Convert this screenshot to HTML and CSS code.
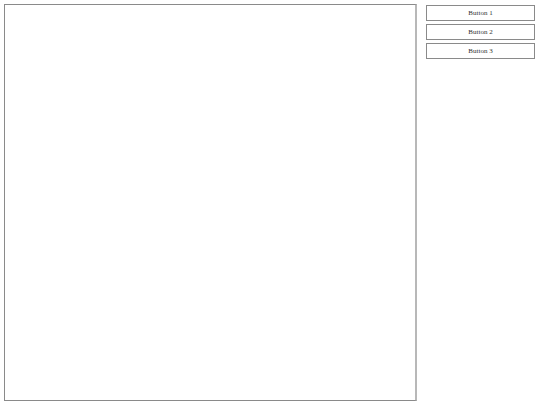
FILE: index.html
```html
<!DOCTYPE html>
<html>
<head>
<meta charset="utf-8">
<link rel="stylesheet" href="styles.css">
</head>
<body>
<div class="page">
  <div class="canvas"></div>
  <div class="controls">
    <button class="btn">Button 1</button>
    <button class="btn">Button 2</button>
    <button class="btn">Button 3</button>
  </div>
</div>
</body>
</html>
```
FILE: styles.css
```css
html, body {
  margin: 0;
  padding: 0;
  background: #ffffff;
}
.page {
  display: flex;
  align-items: flex-start;
  padding: 4px;
  gap: 9px;
}
.canvas {
  box-sizing: border-box;
  width: 413px;
  height: 397px;
  border: 1px solid #8a8a8a;
  border-right: 2px solid #b8b8b8;
}
.controls {
  display: flex;
  flex-direction: column;
  gap: 3px;
  padding-top: 1px;
}
.btn {
  box-sizing: border-box;
  width: 109px;
  height: 16px;
  margin: 0;
  padding: 0;
  background: #ffffff;
  border: 1px solid #8a8a8a;
  font-family: "Liberation Serif", serif;
  font-size: 7px;
  color: #333333;
  line-height: 14px;
  text-align: center;
}
```
